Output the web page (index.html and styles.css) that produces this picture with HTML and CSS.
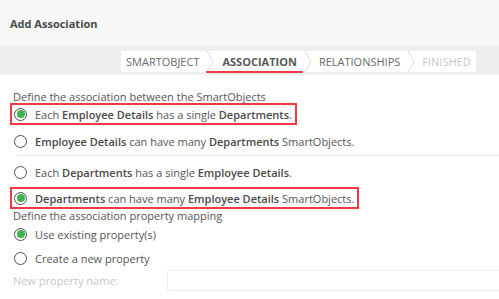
FILE: index.html
```html
<!DOCTYPE html>
<html>
<head>
<meta charset="utf-8">
<link rel="stylesheet" href="styles.css">
</head>
<body>
<div class="header"><span class="title">Add Association</span></div>
<div class="stepbar">
  <div class="steps">
    <div class="step first"><span class="label">SMARTOBJECT</span></div>
    <div class="step active">
      <svg class="chev" width="8" height="21" viewBox="0 0 8 21"><polyline points="1,0 7,10.5 1,21" fill="none" stroke="#dcdcdc" stroke-width="1"/></svg>
      <span class="label">ASSOCIATION</span>
    </div>
    <div class="step">
      <svg class="chev" width="8" height="21" viewBox="0 0 8 21"><polyline points="1,0 7,10.5 1,21" fill="none" stroke="#dcdcdc" stroke-width="1"/></svg>
      <span class="label">RELATIONSHIPS</span>
    </div>
    <div class="step disabled">
      <svg class="chev" width="8" height="21" viewBox="0 0 8 21"><polyline points="1,0 7,10.5 1,21" fill="none" stroke="#dcdcdc" stroke-width="1"/></svg>
      <span class="label">FINISHED</span>
    </div>
  </div>
</div>
<div class="content">
  <div class="section-label">Define the association between the SmartObjects</div>
  <div class="option highlight"><span class="radio checked"></span><span class="text">Each <b>Employee Details</b> has a single <b>Departments</b>.</span></div>
  <div class="option gap"><span class="radio"></span><span class="text"><b>Employee Details</b> can have many <b>Departments</b> SmartObjects.</span></div>
  <div class="separator"></div>
  <div class="option"><span class="radio"></span><span class="text">Each <b>Departments</b> has a single <b>Employee Details</b>.</span></div>
  <div class="option highlight gap-sm"><span class="radio checked"></span><span class="text"><b>Departments</b> can have many <b>Employee Details</b> SmartObjects.</span></div>
  <div class="section-label">Define the association property mapping</div>
  <div class="option plain"><span class="radio checked"></span><span class="text">Use existing property(s)</span></div>
  <div class="option plain gap-xs"><span class="radio"></span><span class="text">Create a new property</span></div>
  <div class="field">
    <span class="field-label">New property name:</span>
    <span class="input"></span>
  </div>
</div>
</body>
</html>
```
FILE: styles.css
```css
* { box-sizing: border-box; }
html, body { margin: 0; padding: 0; background: #fff; overflow: hidden; }
body {
  font-family: "Open Sans", "DejaVu Sans", sans-serif;
  color: #555;
  width: 499px;
  height: 299px;
}
.header {
  height: 46px;
  background: #f7f7f7;
  display: flex;
  align-items: center;
  padding-left: 10px;
}
.title {
  font-size: 11px;
  font-weight: 700;
  color: #4a4a4a;
}
.stepbar {
  height: 29px;
  background: #eeeeee;
  padding: 5px 0 0 121px;
}
.steps {
  display: flex;
  width: 355px;
  height: 21px;
  background: #fff;
  border-radius: 2px;
}
.step {
  position: relative;
  display: flex;
  align-items: center;
  height: 21px;
  font-size: 11px;
  color: #6a6a6a;
}
.step .label { padding: 0 6px 0 7px; line-height: 21px; white-space: nowrap; }
.step.first .label { padding-left: 5px; padding-right: 6px; }
.step .chev { display: block; margin-left: 1px; flex: none; }
.step.active .label { font-weight: 700; color: #585858; padding-left: 8px; padding-right: 6px; }
.step.active::after {
  content: "";
  position: absolute;
  left: 1px;
  right: 0;
  bottom: -1px;
  height: 2px;
  border-radius: 1px;
  background: #ee3a43;
}
.step.disabled .label { color: #c8c8c8; }
.content { padding-top: 15px; }
.section-label {
  font-size: 11px;
  line-height: 14px;
  padding-left: 13px;
  color: #555;
}
.option {
  display: flex;
  align-items: center;
  width: fit-content;
  height: 22px;
  margin-left: 10px;
  padding: 0 3px 0 2px;
  border: 2px solid transparent;
  font-size: 11px;
  color: #555;
  white-space: nowrap;
}
.option.highlight { border-color: #ee3a43; }
.content > .section-label + .option.highlight { margin-top: -1px; }
.option.gap { margin-top: 5px; }
.option.gap-sm { margin-top: 4px; }
.option.gap-xs { margin-top: 2px; }
.option b { font-weight: 600; color: #4a4a4a; }
.radio {
  width: 13px;
  height: 13px;
  border-radius: 50%;
  border: 1.5px solid #4f4f4f;
  background: #fff;
  margin-right: 8px;
  flex: none;
  display: flex;
  align-items: center;
  justify-content: center;
}
.radio.checked::after {
  content: "";
  width: 8px;
  height: 8px;
  border-radius: 50%;
  background: #3fb34f;
}
.separator {
  height: 1px;
  background: #e8e8e8;
  margin: 3px 0 5px 17px;
}
.field {
  display: flex;
  align-items: center;
  height: 21px;
  margin-top: 1px;
  padding-left: 13px;
}
.field-label {
  font-size: 11px;
  color: #c8c8c8;
  width: 154px;
}
.input {
  flex: 1;
  height: 21px;
  border: 1px solid #eeeeee;
  border-right: none;
  border-radius: 2px 0 0 2px;
}
```
